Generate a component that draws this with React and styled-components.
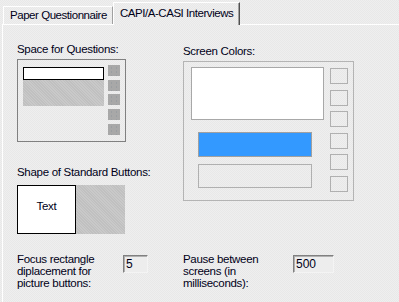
import React from 'react'
import styled, { createGlobalStyle } from 'styled-components'

const GlobalStyle = createGlobalStyle`
  html, body {
    margin: 0;
    padding: 0;
    background: #ededed;
  }
  body {
    font-family: "Liberation Sans", Arial, sans-serif;
    font-size: 11px;
    color: #000018;
  }
`

const dither = `
  background-color: #ececec;
  background-image: repeating-conic-gradient(#efefef 0 25%, #e8e8e8 0 50%);
  background-size: 2px 2px;
`

const Window = styled.div`
  width: 399px;
  height: 302px;
  overflow: hidden;
  display: flex;
  flex-direction: column;
  ${dither}
`

const TabStrip = styled.div`
  display: flex;
  align-items: flex-end;
  height: 24px;
  padding-left: 3px;
  position: relative;
  z-index: 1;
`

const Tab = styled.div`
  box-sizing: border-box;
  height: ${p => (p.active ? '23px' : '18px')};
  margin-bottom: ${p => (p.active ? '-1px' : '0')};
  padding: ${p => (p.active ? '4px 6px 0 6px' : '2px 5px 0 6px')};
  border-top: 1px solid #fff;
  border-left: 1px solid #fff;
  border-right: 1px solid ${p => (p.active ? '#505050' : '#a0a0a0')};
  box-shadow: ${p => (p.active ? 'inset -1px 0 0 #a0a0a0' : 'none')};
  white-space: nowrap;
  font-size: 11.5px;
  letter-spacing: -0.45px;
  ${dither}
`

const Panel = styled.div`
  flex: 1;
  margin-left: 2px;
  border-top: 1px solid #fff;
  border-left: 1px solid #fff;
  padding: 18px 0 0 14px;
  display: grid;
  grid-template-columns: 166px 1fr;
  grid-template-rows: auto auto;
  align-content: start;
`

const Column = styled.div`
  display: flex;
  flex-direction: column;
  padding-top: ${p => p.top || 0}px;
`

const Label = styled.div`
  font-size: 11.5px;
  line-height: 12px;
  height: 12px;
  white-space: nowrap;
  letter-spacing: -0.3px;
  margin-top: ${p => p.before || 0}px;
  margin-bottom: ${p => p.gap || 4}px;
`

const QuestionBox = styled.div`
  box-sizing: border-box;
  width: 109px;
  height: 83px;
  border: 1px solid #808080;
  padding: 5px 0 0 5px;
  display: flex;
  gap: 4px;
`

const QuestionArea = styled.div`
  margin-top: 2px;
  width: 81px;
  display: flex;
  flex-direction: column;
`

const QuestionField = styled.div`
  box-sizing: border-box;
  height: 13px;
  background: #fff;
  border: 1px solid #000;
`

const Hatch = styled.div`
  height: ${p => p.h}px;
  width: ${p => p.w || 'auto'};
  background: repeating-linear-gradient(45deg, #c0c0c0 0 1px, #c9c9c9 1px 2px);
`

const MiniButtons = styled.div`
  display: flex;
  flex-direction: column;
  gap: 3.7px;
`

const MiniButton = styled.div`
  width: 12px;
  height: 11px;
  background-color: #a8a8a8;
  background-image: radial-gradient(rgba(110, 125, 140, 0.6) 0.5px, transparent 0.7px);
  background-size: 5px 4px;
  background-position: 1px 1px;
`

const ButtonShape = styled.div`
  display: flex;
  height: 49px;
`

const ButtonFace = styled.div`
  box-sizing: border-box;
  width: 59px;
  background: #fff;
  border: 1px solid #000;
  display: flex;
  justify-content: center;
  padding-top: 14px;
  font-size: 11.5px;
  letter-spacing: -0.3px;
`

const ColorBox = styled.div`
  box-sizing: border-box;
  width: 171px;
  height: 140px;
  border: 1px solid #b4b4b4;
  padding: 5px 0 0 7px;
  display: flex;
  gap: 5px;
`

const ColorStack = styled.div`
  width: 134px;
  display: flex;
  flex-direction: column;
`

const Swatch = styled.div`
  box-sizing: border-box;
  width: ${p => p.w}px;
  height: ${p => p.h}px;
  margin: ${p => p.m || '0'};
  border: 1px solid ${p => p.line || '#aaaaaa'};
  background: ${p => p.fill || 'transparent'};
`

const ColorButtons = styled.div`
  margin-top: 1px;
  height: 124px;
  display: flex;
  flex-direction: column;
  justify-content: space-between;
`

const FieldRow = styled.div`
  display: flex;
  align-items: flex-start;
  margin-top: 19px;
`

const FieldLabel = styled.div`
  width: ${p => p.w}px;
  font-size: 11.5px;
  line-height: 12px;
  letter-spacing: -0.3px;
`

const NumberBox = styled.div`
  box-sizing: border-box;
  width: ${p => p.w}px;
  height: 18px;
  margin-top: 2px;
  border-top: 1px solid #808080;
  border-left: 1px solid #808080;
  border-right: 1px solid #f4f4f4;
  border-bottom: 1px solid #f4f4f4;
  box-shadow: inset 1px 1px 0 #b0b0b0;
  background: #ededed;
  font-size: 12px;
  line-height: 16px;
  padding-left: 2px;
`

export default function App() {
  const colorButtons = [0, 1, 2, 3, 4, 5]
  const miniButtons = [0, 1, 2, 3, 4]

  return (
    <Window>
      <GlobalStyle />
      <TabStrip>
        <Tab>Paper Questionnaire</Tab>
        <Tab active>CAPI/A-CASI Interviews</Tab>
      </TabStrip>
      <Panel>
        <Column>
          <Label>Space for Questions:</Label>
          <QuestionBox>
            <QuestionArea>
              <QuestionField />
              <Hatch h={26} />
            </QuestionArea>
            <MiniButtons>
              {miniButtons.map(i => <MiniButton key={i} />)}
            </MiniButtons>
          </QuestionBox>
          <Label before={24} gap={7}>Shape of Standard Buttons:</Label>
          <ButtonShape>
            <ButtonFace>Text</ButtonFace>
            <Hatch h={49} w="49px" />
          </ButtonShape>
        </Column>
        <Column top={2}>
          <Label>Screen Colors:</Label>
          <ColorBox>
            <ColorStack>
              <Swatch w={133} h={53} fill="#fff" line="#a8a8a8" />
              <Swatch w={114} h={25} fill="#3399ff" line="#a0a0a0" m="12px 0 0 7px" />
              <Swatch w={114} h={24} line="#b0b0b0" m="7px 0 0 7px" />
            </ColorStack>
            <ColorButtons>
              {colorButtons.map(i => <Swatch key={i} w={18} h={16} line="#b0b0b0" />)}
            </ColorButtons>
          </ColorBox>
        </Column>
        <FieldRow>
          <FieldLabel w={106}>Focus rectangle diplacement for picture buttons:</FieldLabel>
          <NumberBox w={25}>5</NumberBox>
        </FieldRow>
        <FieldRow>
          <FieldLabel w={110}>Pause between screens (in milliseconds):</FieldLabel>
          <NumberBox w={41}>500</NumberBox>
        </FieldRow>
      </Panel>
    </Window>
  )
}
